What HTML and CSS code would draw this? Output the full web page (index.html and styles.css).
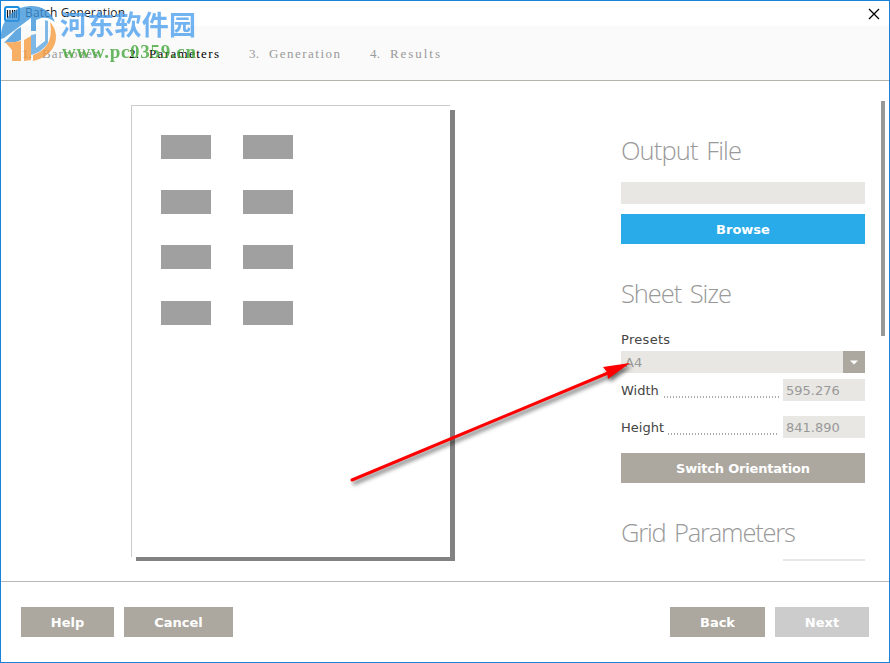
FILE: index.html
```
<!DOCTYPE html>
<html lang="en">
<head>
    <meta charset="utf-8">
    <title>Batch Generation</title>
    <link rel="stylesheet" href="styles.css">
</head>
<body>
<div class="window">
    <div class="titlebar">
        <svg class="app-icon" width="16" height="16" viewBox="0 0 16 16">
            <rect x="1" y="1" width="14" height="14" rx="2" fill="#fff" stroke="#1a8fe0" stroke-width="2"/>
            <path d="M3.5 4v8M6 4v8M8.5 4v8M10.5 4v8M12.5 4v8" stroke="#111" stroke-width="1.2"/>
        </svg>
        <span class="title"><svg width="101" height="18"><text x="0" y="12" textLength="100">Batch Generation</text></svg></span>
        <svg class="close" width="12" height="12" viewBox="0 0 12 12">
            <path d="M1 1L11 11M11 1L1 11" stroke="#000" stroke-width="1.3"/>
        </svg>
    </div>
    <div class="steps">
        <svg width="600" height="20">
            <text x="22" y="14" textLength="10">1.</text>
            <text x="42" y="14" textLength="56">Barcodes</text>
            <text class="active" x="129" y="14" textLength="10">2.</text>
            <text class="active" x="149" y="14" textLength="70">Parameters</text>
            <text x="249" y="14" textLength="10">3.</text>
            <text x="269" y="14" textLength="71">Generation</text>
            <text x="370" y="14" textLength="10">4.</text>
            <text x="390" y="14" textLength="50">Results</text>
        </svg>
    </div>
    <div class="main">
        <div class="preview">
            <div class="sheet">
                <i></i><i></i>
                <i></i><i></i>
                <i></i><i></i>
                <i></i><i></i>
            </div>
        </div>
        <div class="params">
            <h2><svg width="244" height="36"><text x="0" y="27" textLength="121">Output File</text></svg></h2>
            <div class="field"></div>
            <div class="btn blue">Browse</div>
            <h2 class="size"><svg width="244" height="36"><text x="0" y="27" textLength="111">Sheet Size</text></svg></h2>
            <div class="label">Presets</div>
            <div class="select"><span>A4</span><b><svg width="8" height="5" viewBox="0 0 8 5"><path d="M0 0.5H8L4 4.5Z" fill="#fff"/></svg></b></div>
            <div class="row"><label>Width</label><span class="dots"></span><div class="field">595.276</div></div>
            <div class="row second"><label>Height</label><span class="dots"></span><div class="field">841.890</div></div>
            <div class="btn switch">Switch Orientation</div>
            <h2 class="grid"><svg width="244" height="36"><text x="0" y="27" textLength="175">Grid Parameters</text></svg></h2>
            <div class="row"><div class="field"></div></div>
        </div>
        <div class="scroll"></div>
    </div>
    <div class="footer">
        <div class="btn help">Help</div>
        <div class="btn cancel">Cancel</div>
        <div class="btn back">Back</div>
        <div class="btn next">Next</div>
    </div>
</div>

<svg class="arrow" width="890" height="663" viewBox="0 0 890 663">
    <path d="M352 480L608 373" stroke="#f00" stroke-width="3" stroke-linecap="round"/>
    <path d="M630 363L603 367L607 372L608 379Z" fill="#f00"/>
</svg>

<svg class="watermark" width="210" height="70" viewBox="0 0 210 70">
    <path d="M1 39C0 20 14 6 31 6C43 6 51 12 55 22C50 18 46 17 41 18L36 20L36 31L31 31L31 18L4 38Z" fill="#3a94db"/>
    <path d="M4 43L16 30L21 27L21 40L16 42Z" fill="#3a94db"/>
    <path d="M31 35L36 34L36 48L45 41L45 20L48 21L48 43C43 50 38 53 31 55Z" fill="#5aa6e2"/>
    <path d="M5 42C10 43 15 42 21 41L21 61L12 61L12 50Z" fill="#f79a3c"/>
    <path d="M24 40L31 36L31 60L24 61Z" fill="#f79a3c"/>
    <path d="M50 22C62 35 56 56 33 61L33 55C48 50 53 38 50 22Z" fill="#f79a3c"/>
    <text class="cn" x="60" y="35" textLength="136">河东软件园</text>
    <text class="url" x="62" y="58" textLength="134">www.pc0359.cn</text>
</svg>
</body>
</html>
```
FILE: styles.css
```
*{
    box-sizing: border-box;
}
body{
    margin: 0;
    font-family: "DejaVu Sans", Verdana, sans-serif;
    font-size: 13px;
    color: #444;
}
svg{
    display: block;
}
.window{
    width: 890px;
    height: 663px;
    border: 1px solid #1a82d8;
    background: #fff;
    display: flex;
    flex-direction: column;
    overflow: hidden;
}
.titlebar{
    height: 25px;
    display: flex;
    align-items: center;
    padding: 0 9px 0 3px;
}
.title{
    margin-left: 5px;
}
.title text{
    font: 12px "Open Sans", sans-serif;
    fill: #222;
}
.close{
    margin-left: auto;
}
.steps{
    height: 55px;
    background: #fafafa;
    border-bottom: 1px solid #b4b4ac;
    padding-top: 18px;
}
.steps svg{
    margin-left: -1px;
}
.steps text{
    font: 13px "Liberation Serif", serif;
    fill: #999;
}
.steps .active{
    fill: #000;
}
.main{
    height: 501px;
    border-bottom: 1px solid #b8b8b8;
    display: flex;
    padding-bottom: 20px;
}
.preview{
    width: 620px;
    padding: 24px 0 0 130px;
    overflow: hidden;
}
.sheet{
    width: 319px;
    height: 452px;
    border-top: 1px solid #ccc;
    border-left: 1px solid #ccc;
    box-shadow: 5px 5px 0 #828282;
    background: #fff;
    display: grid;
    grid-template-columns: 50px 50px;
    grid-auto-rows: 24px;
    align-content: start;
    gap: 31.2px 32px;
    padding: 29px;
}
.sheet i{
    background: #a0a0a0;
}
.params{
    width: 244px;
    padding-top: 52px;
    overflow: hidden;
}
h2{
    margin: 0 0 13px;
    height: 36px;
}
h2 text{
    font: 300 25.5px "Open Sans", sans-serif;
    word-spacing: 3px;
    fill: #999;
}
h2.size{
    margin: 32px 0 19px;
}
h2.grid{
    margin: 32px 0 8px;
}
.field{
    height: 22px;
    background: #e8e7e3;
    color: #999;
    line-height: 23px;
    padding-left: 3px;
}
.btn{
    height: 30px;
    background: #aca89f;
    color: #fff;
    font-weight: bold;
    line-height: 31px;
    text-align: center;
}
.blue{
    background: #29aae9;
    margin-top: 10px;
}
.switch{
    letter-spacing: -0.2px;
}
.label{
    height: 20px;
    line-height: 17px;
    letter-spacing: 0.3px;
}
.select{
    height: 22px;
    background: #e8e7e3;
    color: #999;
    display: flex;
    justify-content: space-between;
    line-height: 23px;
    padding-left: 4px;
    margin-bottom: 6px;
}
.select b{
    width: 22px;
    background: #aca89f;
    display: flex;
    align-items: center;
    justify-content: center;
}
.row{
    display: flex;
    height: 22px;
    line-height: 23px;
}
.row .field{
    width: 82px;
    margin-left: auto;
}
.second{
    margin: 15px 0;
}
.dots{
    flex: 1;
    height: 2px;
    margin: 17px 4px 0 5px;
    background: repeating-linear-gradient(90deg, #aaa 0 1px, transparent 1px 3px);
}
.second .dots{
    margin-left: 4px;
}
.scroll{
    width: 4px;
    height: 235px;
    margin: 20px 0 0 16px;
    background: #969998;
}
.footer{
    display: flex;
    gap: 10px;
    padding: 25px 20px 0;
}
.help{
    width: 93px;
}
.cancel{
    width: 109px;
}
.back{
    width: 95px;
    margin-left: auto;
}
.next{
    width: 94px;
    background: #ccc;
}
.arrow{
    position: absolute;
    top: 0;
    left: 0;
    filter: drop-shadow(2px 3px 2px rgba(0,0,0,0.6));
}
.watermark{
    position: absolute;
    top: 0;
    left: 0;
    opacity: 0.78;
}
.cn{
    font: bold 27px "Noto Sans CJK SC", sans-serif;
    fill: #4a9fee;
}
.url{
    font: bold 19px "Liberation Serif", serif;
    fill: #3fa535;
}
```
